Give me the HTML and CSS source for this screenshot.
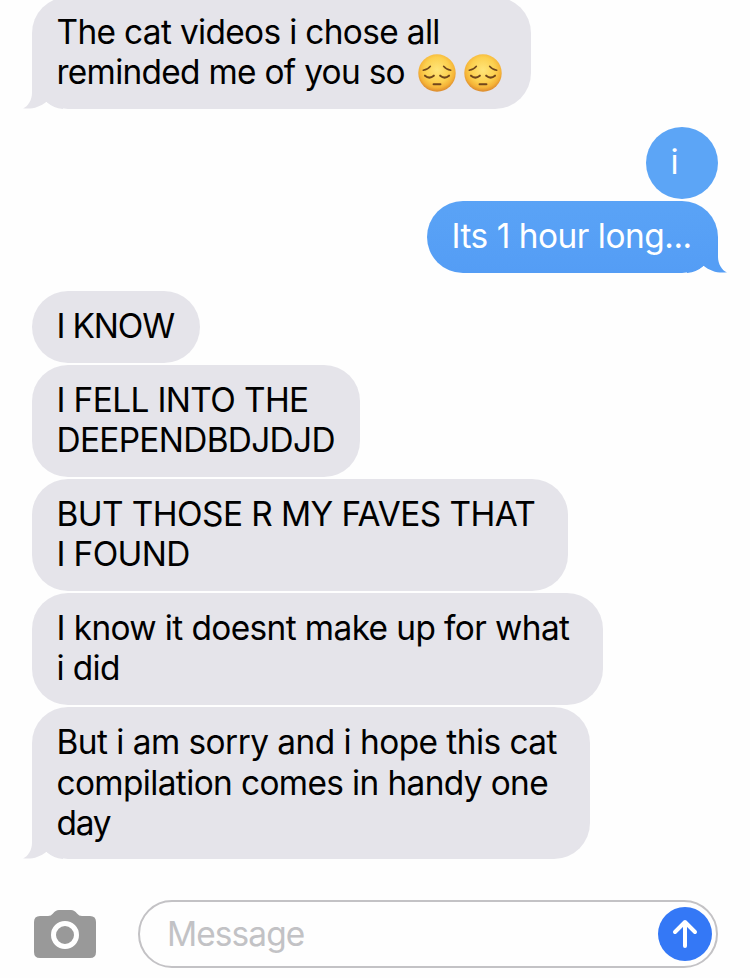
FILE: index.html
```html
<!DOCTYPE html>
<html lang="en">
	<head>
		<meta charset="UTF-8">
		<meta name="viewport" content="width=device-width, initial-scale=1.0">
		<title>Messages</title>
		<link rel="stylesheet" href="styles.css">
	</head>
	<body>
	<svg class="defs" width="0" height="0">
		<defs>
			<radialGradient id="face" cx="50%" cy="42%" r="56%">
				<stop offset="0" stop-color="#ffe57a"/>
				<stop offset=".6" stop-color="#fcd04f"/>
				<stop offset=".85" stop-color="#f5b337"/>
				<stop offset="1" stop-color="#df9030"/>
			</radialGradient>
			<symbol id="pensive" viewBox="0 0 38 38">
				<circle cx="19" cy="19" r="18.7" fill="url(#face)"/>
				<g fill="none" stroke="#70461b" stroke-linecap="round">
					<path stroke-width="1.5" d="M5.2 16.2Q10 15.6 12.4 12.3M32.8 16.2Q28 15.6 25.6 12.3"/>
					<path stroke-width="2.1" d="M7 21.7Q11.3 25.4 15.8 21.7M22.2 21.7Q26.7 25.4 31 21.7"/>
					<path stroke-width="2.1" d="M15.6 30.3H22.4"/>
				</g>
			</symbol>
		</defs>
	</svg>
	<main class="thread">
		<div class="bubble received b1">
			<span class="l1">The cat videos i chose all</span><br>
			<span class="l2">reminded me of you so</span>
			<svg class="emoji"><use href="#pensive"/></svg><svg class="emoji"><use href="#pensive"/></svg>
			<svg class="tail"><path d="M9 0V20C9 27 5 33.5 0 35.3C9 36.5 17 34 23.5 28.7Q30 35 40 36V0Z"/></svg>
		</div>
		<div class="bubble sent single gap">i</div>
		<div class="bubble sent b2">
			<span class="l3">Its 1 hour long...</span>
			<svg class="tail"><path d="M31 0V20C31 27 35 33.5 40 35.3C31 36.5 23 34 16.5 28.7Q10 35 0 36V0Z"/></svg>
		</div>
		<div class="bubble received gap b3"><span class="l4">I KNOW</span></div>
		<div class="bubble received b4">
			<span class="l5">I FELL INTO THE</span><br>
			<span class="l6">DEEPENDBDJDJD</span>
		</div>
		<div class="bubble received b5">
			<span class="l7">BUT THOSE R MY FAVES THAT</span><br>
			<span class="l8">I FOUND</span>
		</div>
		<div class="bubble received b6">
			<span class="l9">I know it doesnt make up for what</span><br>
			<span class="l10">i did</span>
		</div>
		<div class="bubble received b7">
			<span class="l11">But i am sorry and i hope this cat</span><br>
			<span class="l12">compilation comes in handy one</span><br>
			<span class="l13">day</span>
			<svg class="tail"><path d="M9 0V20C9 27 5 33.5 0 35.3C9 36.5 17 34 23.5 28.7Q30 35 40 36V0Z"/></svg>
		</div>
	</main>
	<footer class="composer">
		<svg class="camera" viewBox="0 0 62 48">
			<path fill="#999" d="M6 6H14Q17 6 19 3.5Q21.5 0 25 0H37Q40.5 0 43 3.5Q45 6 48 6H56Q62 6 62 12V42Q62 48 56 48H6Q0 48 0 42V12Q0 6 6 6Z"/>
			<circle cx="31" cy="25" r="11.5" fill="none" stroke="#fff" stroke-width="5"/>
		</svg>
		<div class="field">
			<span class="placeholder">Message</span>
			<svg class="send" viewBox="0 0 54 54">
				<circle cx="27" cy="27" r="27" fill="#3478f6"/>
				<path fill="none" stroke="#fff" stroke-width="4" stroke-linecap="round" stroke-linejoin="round" d="M27 39V15M17 25L27 15L37 25"/>
			</svg>
		</div>
	</footer>
	</body>
</html>
```
FILE: styles.css
```css
body {
	margin: 0;
	width: 750px;
	height: 978px;
	overflow: hidden;
	background-color: #fefefe;
	font-family: Inter, "Liberation Sans", sans-serif;
	font-size: 33.4px;
	line-height: 40px;
}

.defs {
	display: block;
}

.thread {
	display: flex;
	flex-direction: column;
	align-items: flex-start;
	gap: 2px;
	margin-top: -3px;
	padding: 0 32px;
	isolation: isolate;
}

.bubble {
	position: relative;
	box-sizing: border-box;
	padding: 15px 0 17px 24.5px;
	border-radius: 36px;
	white-space: nowrap;
}

.received {
	background-color: #e5e4ea;
	color: #000;
	fill: #e5e4ea;
}

.sent {
	align-self: flex-end;
	background-color: #569ff5;
	color: #fff;
}

.single {
	width: 72px;
	background-color: #5ca5f6;
}

.gap {
	margin-top: 16px;
}

.b1 { width: 499px; height: 112px; }
.b2 { width: 291px; background-image: linear-gradient(#5aa3f6, #549df5); fill: #559ef5; }
.b3 { width: 168px; }
.b4 { width: 328px; }
.b5 { width: 536px; }
.b6 { width: 571px; }
.b7 { width: 558px; height: 152px; line-height: 40.6px; }

/* tracking per line */
.l1 { letter-spacing: -.65px; }
.l2 { letter-spacing: -.7px; }
.l3 { letter-spacing: -.47px; }
.l4 { letter-spacing: -1.15px; }
.l5 { letter-spacing: -.62px; }
.l6 { letter-spacing: -.68px; }
.l7 { letter-spacing: -.57px; }
.l8 { letter-spacing: -.64px; }
.l9 { letter-spacing: -.6px; }
.l10 { letter-spacing: -.65px; }
.l11 { letter-spacing: -.53px; }
.l12 { letter-spacing: -.62px; }
.l13 { letter-spacing: -1.2px; }

.tail {
	position: absolute;
	z-index: -1;
	bottom: 0;
	left: -9px;
	width: 40px;
	height: 36px;
}

.sent .tail {
	left: auto;
	right: -9px;
}

.emoji {
	width: 38px;
	height: 38px;
	margin: 0 4px;
	vertical-align: -8px;
}

.composer {
	display: flex;
	align-items: center;
	gap: 42px;
	margin-top: 41px;
	padding: 0 32px 0 34px;
}

.camera {
	width: 62px;
	height: 48px;
}

.field {
	box-sizing: border-box;
	display: flex;
	flex: 1;
	align-items: center;
	justify-content: space-between;
	height: 68px;
	padding: 0 4px 0 27px;
	border: 2px solid #c3c2c5;
	border-radius: 34px;
}

.placeholder {
	color: #c2c2c5;
	letter-spacing: -.9px;
}

.send {
	width: 54px;
	height: 54px;
}
```
